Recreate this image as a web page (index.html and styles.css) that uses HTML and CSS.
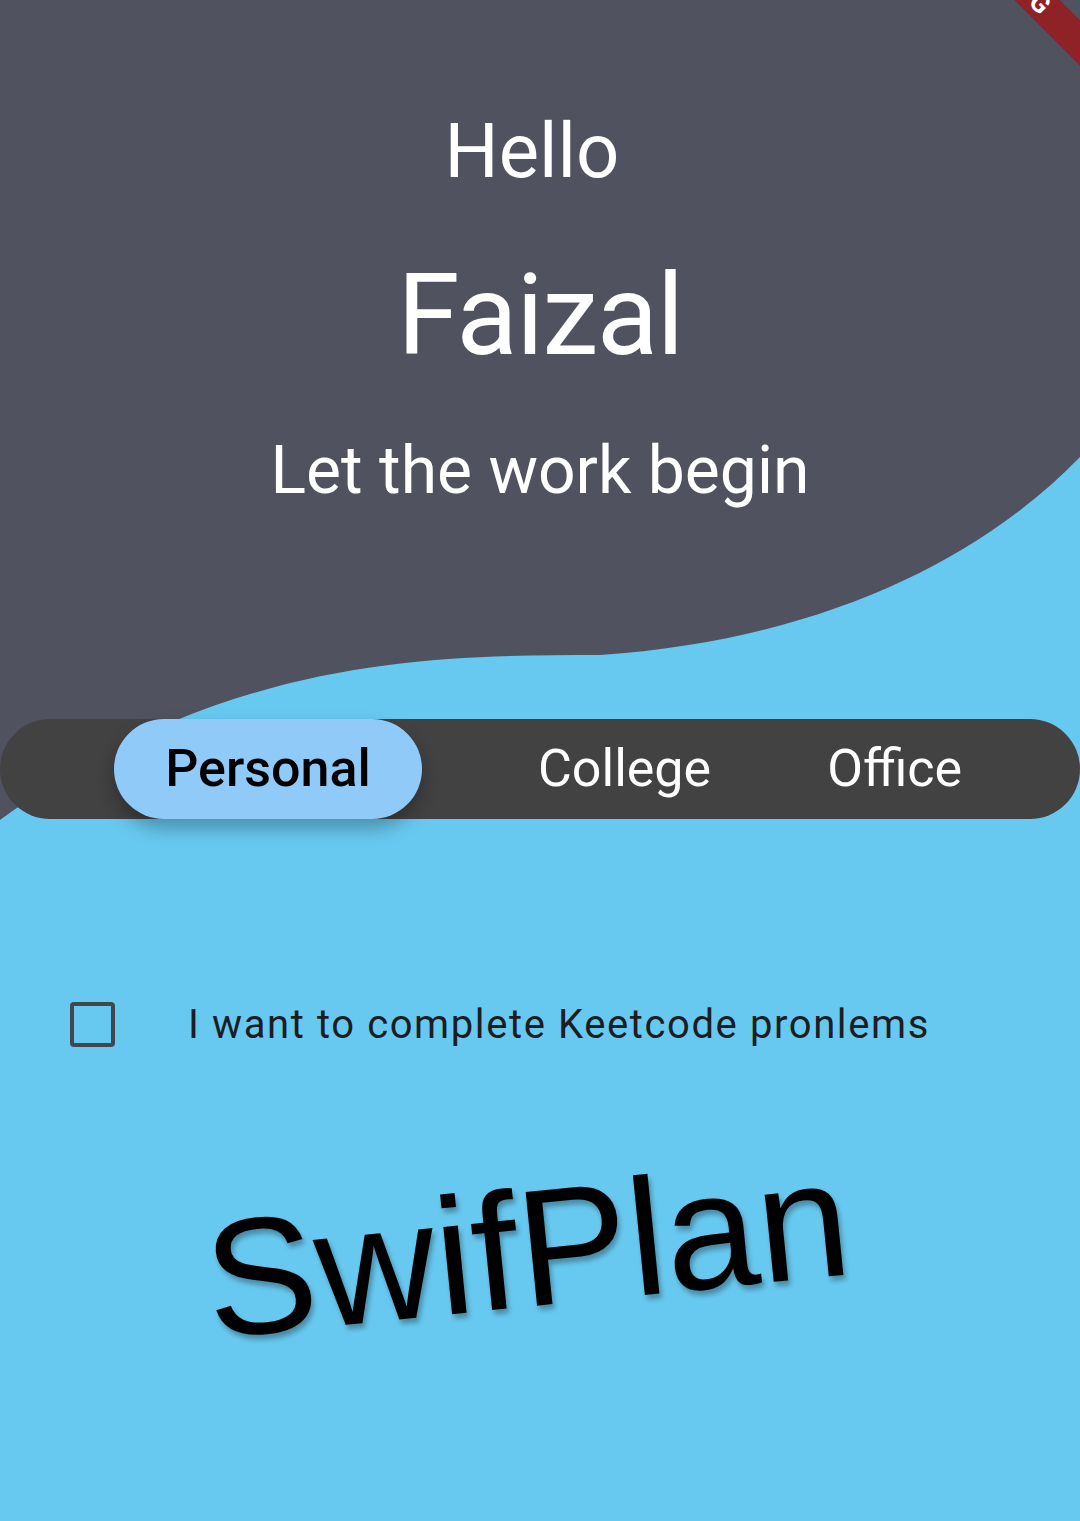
FILE: index.html
```html
<!DOCTYPE html>
<html>
<head>
<meta charset="utf-8">
<link rel="stylesheet" href="styles.css">
</head>
<body>
<div class="page">
  <svg class="wave" width="1080" height="830" viewBox="0 0 1080 830" xmlns="http://www.w3.org/2000/svg">
    <path d="M0,0 H1080 V457 C980,560 820,640 600,655 C420,655 220,660 0,820 Z" fill="#50535f"/>
  </svg>
  <div class="debug-banner"><span>DEBUG</span></div>

  <header class="header">
    <div class="hello">Hello</div>
    <div class="name">Faizal</div>
    <div class="tagline">Let the work begin</div>
  </header>

  <nav class="tabbar">
    <div class="tab tab-active">Personal</div>
    <div class="tab">College</div>
    <div class="tab">Office</div>
  </nav>

  <div class="todo">
    <div class="checkbox"></div>
    <div class="todo-text">I want to complete Keetcode pronlems</div>
  </div>

  <div class="logo">SwifPlan</div>
</div>
</body>
</html>
```

FILE: styles.css
```css
html, body {
  margin: 0;
  padding: 0;
}
body {
  width: 1080px;
  height: 1521px;
  overflow: hidden;
  background: #68c9f0;
}
.page {
  position: relative;
  width: 1080px;
  height: 1521px;
  overflow: hidden;
  background: #68c9f0;
  font-family: Roboto, "Noto Sans", sans-serif;
}
.wave {
  position: absolute;
  left: 0;
  top: 0;
  display: block;
}
.debug-banner {
  position: absolute;
  left: 816px;
  top: -37px;
  width: 400px;
  height: 32px;
  background: #8e2226;
  transform: rotate(45deg);
  display: flex;
  align-items: center;
  justify-content: center;
  color: #fff;
  font-weight: 700;
  font-size: 26px;
  letter-spacing: 1px;
  z-index: 5;
}
.header {
  position: relative;
  padding-top: 113px;
  text-align: center;
  color: #fff;
}
.hello {
  font-size: 76px;
  line-height: 76px;
  margin-left: -16px;
}
.name {
  font-size: 113px;
  line-height: 113px;
  margin-top: 70px;
  letter-spacing: -1.5px;
}
.tagline {
  font-size: 66px;
  line-height: 66px;
  margin-top: 66px;
}
.tabbar {
  position: relative;
  margin-top: 215px;
  height: 100px;
  border-radius: 50px;
  background: #424242;
  display: flex;
  align-items: center;
  padding-left: 114px;
  gap: 116px;
}
.tab {
  color: #fff;
  font-size: 52px;
  line-height: 100px;
}
.tab-active {
  width: 308px;
  height: 100px;
  border-radius: 50px;
  background: #90caf9;
  color: #000;
  font-weight: 500;
  text-align: center;
  box-shadow: 0 10px 18px rgba(0, 0, 0, 0.28);
}
.todo {
  position: relative;
  margin-top: 182px;
  display: flex;
  align-items: center;
  padding-left: 70px;
}
.checkbox {
  width: 37px;
  height: 37px;
  border: 4px solid #42464f;
  border-radius: 4px;
}
.todo-text {
  margin-left: 73px;
  font-size: 40px;
  color: #1c1d22;
  letter-spacing: 1.6px;
}
.logo {
  position: relative;
  margin-top: 117px;
  text-align: center;
  padding-right: 26px;
  font-family: "Liberation Sans", Arial, sans-serif;
  font-size: 166px;
  line-height: 166px;
  color: #000;
  transform: rotate(-0.1rad);
  text-shadow: 2px 5px 5px rgba(0, 0, 0, 0.3);
}
```
